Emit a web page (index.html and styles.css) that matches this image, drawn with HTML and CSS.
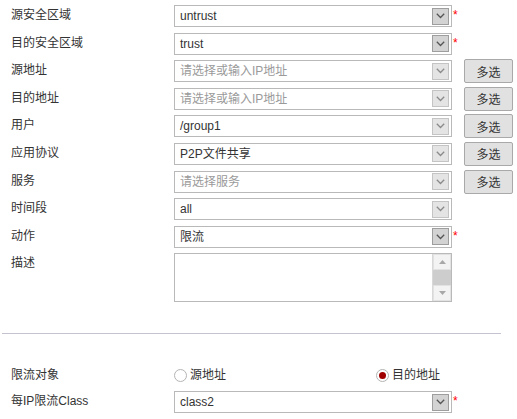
FILE: index.html
```html
<!DOCTYPE html>
<html lang="zh-CN">
<head>
<meta charset="utf-8">
<title>策略</title>
<link rel="stylesheet" href="styles.css">
</head>
<body>
<div class="form">
  <div class="row">
    <div class="lbl">源安全区域</div>
    <div class="select"><span class="val">untrust</span><span class="arrow dark"><svg width="9" height="6" viewBox="0 0 9 6"><polyline points="0.8,0.8 4.5,4.5 8.2,0.8" /></svg></span></div>
    <span class="req">*</span>
  </div>
  <div class="row">
    <div class="lbl">目的安全区域</div>
    <div class="select"><span class="val">trust</span><span class="arrow dark"><svg width="9" height="6" viewBox="0 0 9 6"><polyline points="0.8,0.8 4.5,4.5 8.2,0.8" /></svg></span></div>
    <span class="req">*</span>
  </div>
  <div class="row">
    <div class="lbl">源地址</div>
    <div class="select"><span class="val ph">请选择或输入IP地址</span><span class="arrow"><svg width="9" height="6" viewBox="0 0 9 6"><polyline points="0.8,0.8 4.5,4.5 8.2,0.8" /></svg></span></div>
    <span class="gap"></span>
    <button class="btn">多选</button>
  </div>
  <div class="row">
    <div class="lbl">目的地址</div>
    <div class="select"><span class="val ph">请选择或输入IP地址</span><span class="arrow"><svg width="9" height="6" viewBox="0 0 9 6"><polyline points="0.8,0.8 4.5,4.5 8.2,0.8" /></svg></span></div>
    <span class="gap"></span>
    <button class="btn">多选</button>
  </div>
  <div class="row">
    <div class="lbl">用户</div>
    <div class="select"><span class="val">/group1</span><span class="arrow"><svg width="9" height="6" viewBox="0 0 9 6"><polyline points="0.8,0.8 4.5,4.5 8.2,0.8" /></svg></span></div>
    <span class="gap"></span>
    <button class="btn">多选</button>
  </div>
  <div class="row">
    <div class="lbl">应用协议</div>
    <div class="select"><span class="val">P2P文件共享</span><span class="arrow"><svg width="9" height="6" viewBox="0 0 9 6"><polyline points="0.8,0.8 4.5,4.5 8.2,0.8" /></svg></span></div>
    <span class="gap"></span>
    <button class="btn">多选</button>
  </div>
  <div class="row">
    <div class="lbl">服务</div>
    <div class="select"><span class="val ph">请选择服务</span><span class="arrow"><svg width="9" height="6" viewBox="0 0 9 6"><polyline points="0.8,0.8 4.5,4.5 8.2,0.8" /></svg></span></div>
    <span class="gap"></span>
    <button class="btn">多选</button>
  </div>
  <div class="row">
    <div class="lbl">时间段</div>
    <div class="select"><span class="val">all</span><span class="arrow"><svg width="9" height="6" viewBox="0 0 9 6"><polyline points="0.8,0.8 4.5,4.5 8.2,0.8" /></svg></span></div>
  </div>
  <div class="row">
    <div class="lbl">动作</div>
    <div class="select"><span class="val">限流</span><span class="arrow dark"><svg width="9" height="6" viewBox="0 0 9 6"><polyline points="0.8,0.8 4.5,4.5 8.2,0.8" /></svg></span></div>
    <span class="req">*</span>
  </div>
  <div class="row row-tall">
    <div class="lbl">描述</div>
    <div class="textarea">
      <div class="ta-body"></div>
      <div class="scroll">
        <span class="sb-btn"><svg width="7" height="4" viewBox="0 0 7 4"><polygon points="0,4 3.5,0 7,4" /></svg></span>
        <span class="sb-thumb"></span>
        <span class="sb-btn"><svg width="7" height="4" viewBox="0 0 7 4"><polygon points="0,0 3.5,4 7,0" /></svg></span>
      </div>
    </div>
  </div>
</div>

<div class="divider"></div>

<div class="form form-bottom">
  <div class="row row-radio">
    <div class="lbl">限流对象</div>
    <div class="radios">
      <label class="radio"><span class="circle"></span>源地址</label>
      <label class="radio"><span class="circle on"></span>目的地址</label>
    </div>
  </div>
  <div class="row">
    <div class="lbl">每IP限流Class</div>
    <div class="select"><span class="val">class2</span><span class="arrow dark"><svg width="9" height="6" viewBox="0 0 9 6"><polyline points="0.8,0.8 4.5,4.5 8.2,0.8" /></svg></span></div>
    <span class="req">*</span>
  </div>
</div>
</body>
</html>
```
FILE: styles.css
```css
html, body {
  margin: 0;
  padding: 0;
  background: #ffffff;
}

body {
  font-family: "Liberation Sans", "Noto Sans CJK SC", sans-serif;
  font-size: 12px;
  color: #333333;
  width: 517px;
  height: 419px;
  overflow: hidden;
}

.form {
  padding-top: 5px;
}

.row {
  display: grid;
  grid-template-columns: 174px 278px 12px 49px;
  height: 27.6px;
  align-items: start;
}

.row-tall {
  height: 49px;
}

.lbl {
  padding-left: 11px;
  line-height: 20px;
  color: #333333;
  white-space: nowrap;
}

.select {
  height: 22px;
  box-sizing: border-box;
  border: 1px solid #b9b9b9;
  background: #ffffff;
  display: flex;
  align-items: center;
}

.val {
  flex: 1;
  padding-left: 5px;
  line-height: 20px;
  color: #333333;
  white-space: nowrap;
  overflow: hidden;
}

.val.ph {
  color: #9a9a9a;
}

.arrow {
  width: 17px;
  height: 17px;
  box-sizing: border-box;
  margin-right: 2px;
  border: 1px solid #c4c4c4;
  background: #e4e4e4;
  display: flex;
  align-items: center;
  justify-content: center;
}

.arrow svg polyline {
  fill: none;
  stroke: #8a8a8a;
  stroke-width: 1.3;
}

.arrow.dark {
  border-color: #9e9e9e;
  background: #d3d3d3;
}

.arrow.dark svg polyline {
  stroke: #555555;
}

.req {
  color: #ff0000;
  font-size: 12px;
  line-height: 14px;
  padding-left: 1px;
  padding-top: 3px;
}

.btn {
  height: 24px;
  margin-top: -1px;
  padding: 0;
  border: 1px solid #a9a9a9;
  border-radius: 2px;
  background: #e1e1e1;
  font-family: "Liberation Sans", "Noto Sans CJK SC", sans-serif;
  font-size: 12px;
  color: #333333;
}

.textarea {
  height: 49px;
  box-sizing: border-box;
  border: 1px solid #b9b9b9;
  display: flex;
  background: #ffffff;
}

.ta-body {
  flex: 1;
}

.scroll {
  width: 18px;
  display: flex;
  flex-direction: column;
  background: #cfcfcf;
  border-left: 1px solid #d8d8d8;
}

.sb-btn {
  height: 16px;
  box-sizing: border-box;
  border: 1px solid #e2e2e2;
  background: #f3f3f3;
  display: flex;
  align-items: center;
  justify-content: center;
}

.sb-btn svg polygon {
  fill: #a8a8a8;
}

.sb-thumb {
  flex: 1;
  background: #cdcdcd;
}

.divider {
  margin: 31px 16px 0 2px;
  height: 1px;
  background: #c4c4d0;
}

.form-bottom {
  padding-top: 31px;
}

.row-radio {
  height: 26px;
}

.radios {
  display: flex;
  justify-content: space-between;
  width: 266px;
  padding-top: 3px;
}

.radio {
  display: flex;
  align-items: center;
  gap: 3px;
  color: #333333;
  line-height: 14px;
}

.circle {
  width: 13px;
  height: 13px;
  box-sizing: border-box;
  border: 1px solid #b4b4b4;
  border-radius: 50%;
  background: #ffffff;
  display: flex;
  align-items: center;
  justify-content: center;
}

.circle.on::after {
  content: "";
  width: 7px;
  height: 7px;
  border-radius: 50%;
  background: #a00000;
}
```
